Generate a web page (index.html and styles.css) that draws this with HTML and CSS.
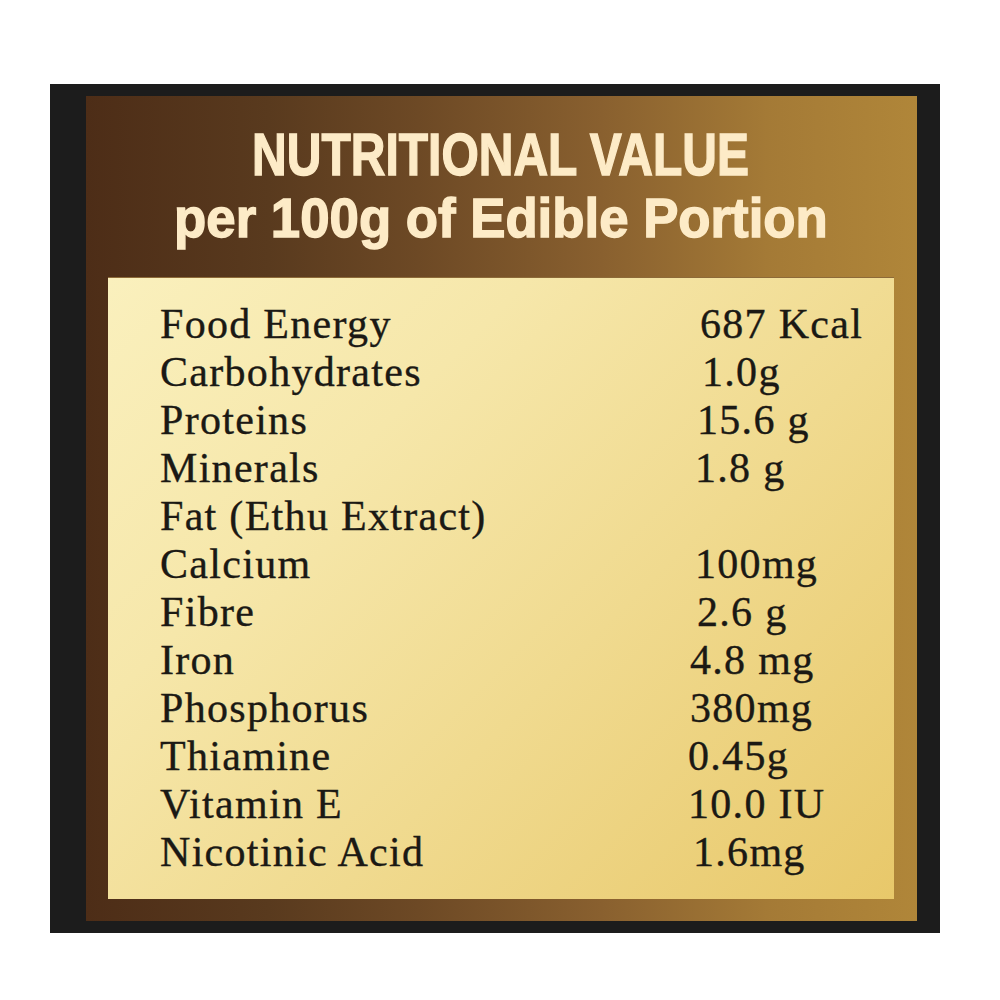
FILE: index.html
```html
<!DOCTYPE html>
<html lang="en">
<head>
<meta charset="utf-8">
<title>Nutritional Value</title>
<link rel="stylesheet" href="styles.css">
</head>
<body>
<div class="frame">
  <div class="panel">
    <h1 class="title">
      <span class="line line-1"><span class="squeeze-1">NUTRITIONAL VALUE</span></span>
      <span class="line line-2"><span class="squeeze-2">per 100g of Edible Portion</span></span>
    </h1>
    <div class="card">
      <div class="row"><span class="label">Food Energy</span><span class="value o12">687 Kcal</span></div>
      <div class="row"><span class="label">Carbohydrates</span><span class="value o14">1.0g</span></div>
      <div class="row"><span class="label">Proteins</span><span class="value o9">15.6 g</span></div>
      <div class="row"><span class="label">Minerals</span><span class="value o7">1.8 g</span></div>
      <div class="row"><span class="label">Fat (Ethu Extract)</span><span class="value"></span></div>
      <div class="row"><span class="label">Calcium</span><span class="value o7">100mg</span></div>
      <div class="row"><span class="label">Fibre</span><span class="value o9">2.6 g</span></div>
      <div class="row"><span class="label">Iron</span><span class="value o2">4.8 mg</span></div>
      <div class="row"><span class="label">Phosphorus</span><span class="value o2">380mg</span></div>
      <div class="row"><span class="label">Thiamine</span><span class="value">0.45g</span></div>
      <div class="row"><span class="label">Vitamin E</span><span class="value">10.0 IU</span></div>
      <div class="row"><span class="label">Nicotinic Acid</span><span class="value o5">1.6mg</span></div>
    </div>
  </div>
</div>
</body>
</html>
```

FILE: styles.css
```css
html, body {
  margin: 0;
  padding: 0;
  background: #ffffff;
}

body {
  width: 1000px;
  height: 1000px;
  padding-top: 84px;
  box-sizing: border-box;
}

.frame {
  margin-left: 50px;
  width: 890px;
  height: 849px;
  box-sizing: border-box;
  background: #1c1c1c;
  padding: 12px 23px 12px 36px;
  display: flex;
}

.panel {
  flex: 1;
  display: flex;
  flex-direction: column;
  background: linear-gradient(to right, #4d2d17 0%, #593a1e 22%, #6d4925 40%, #89602f 62%, #a47a36 82%, #b08639 100%);
  padding: 27px 23px 22px 22px;
}

.title {
  margin: 0;
  font-family: "Liberation Sans", Arial, sans-serif;
  font-weight: bold;
  color: #fdebc7;
  -webkit-text-stroke: 1.4px #fdebc7;
  text-align: center;
  display: flex;
  flex-direction: column;
  align-items: center;
}

.line {
  display: block;
  white-space: nowrap;
}

.line-1 {
  font-size: 60px;
  line-height: 64px;
  height: 64px;
}

.line-2 {
  font-size: 56px;
  line-height: 62px;
  height: 62px;
}

.squeeze-1 {
  display: inline-block;
  transform: scaleX(0.8);
  transform-origin: center;
}

.squeeze-2 {
  display: inline-block;
  transform: scaleX(0.942);
  transform-origin: center;
}

.card {
  margin-top: 28px;
  flex: 1;
  background: linear-gradient(135deg, #faf0bd 0%, #f6e7aa 30%, #f0da8f 60%, #e8c86a 100%);
  border-top: 1px solid #8d6a38;
  padding: 22px 0 0 52px;
  font-family: "Liberation Serif", "Times New Roman", serif;
  font-size: 42px;
  line-height: 48px;
  letter-spacing: 1.3px;
  color: #1b1914;
  -webkit-text-stroke: 0.35px #1b1914;
}

.row {
  display: grid;
  grid-template-columns: 528px auto;
  height: 48px;
}

.label,
.value {
  white-space: nowrap;
}

.o2 { padding-left: 2px; }
.o5 { padding-left: 5px; }
.o7 { padding-left: 7px; }
.o9 { padding-left: 9px; }
.o12 { padding-left: 12px; }
.o14 { padding-left: 14px; }
```
